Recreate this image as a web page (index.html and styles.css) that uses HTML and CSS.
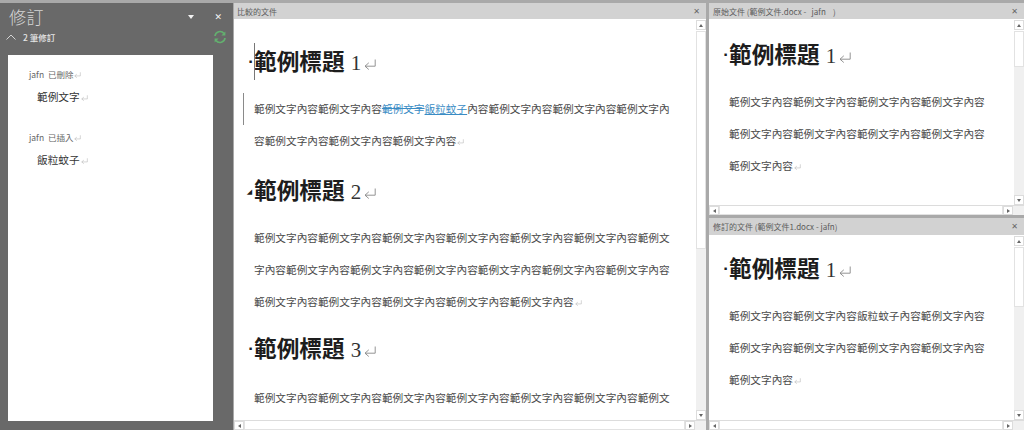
FILE: index.html
```html
<!DOCTYPE html>
<html lang="zh-Hant">
<head>
    <meta charset="UTF-8">
    <title>比較的文件</title>
    <link rel="stylesheet" href="styles.css">
</head>
<body>
    <svg class="defs" aria-hidden="true">
        <symbol id="ret" viewBox="0 0 12 11">
            <path d="M11.2 0.5V7.2H1M1 7.2L4.8 3.8M1 7.2L4.8 10.5" fill="none" stroke="currentColor" stroke-width="0.9"/>
        </symbol>
    </svg>
    <div class="app">
        <!-- Revisions panel -->
        <aside class="side">
            <div class="side-title">
                <span class="side-name">修訂</span>
                <span class="side-caret"></span>
                <span class="side-close">✕</span>
            </div>
            <div class="side-count">
                <svg class="chevron" viewBox="0 0 10 6"><path d="M0.5 5.5L5 1L9.5 5.5" fill="none" stroke="#d4d4d4" stroke-width="1"/></svg>
                <span class="count-text">2 筆修訂</span>
                <svg class="refresh" viewBox="0 0 14 14">
                    <path d="M2 6A5 5 0 0 1 11 3.6" fill="none" stroke="#63b06f" stroke-width="1.7"/>
                    <path d="M12.4 1.4V5.4H8.4Z" fill="#63b06f"/>
                    <path d="M12 8A5 5 0 0 1 3 10.4" fill="none" stroke="#63b06f" stroke-width="1.7"/>
                    <path d="M1.6 12.6V8.6H5.6Z" fill="#63b06f"/>
                </svg>
            </div>
            <div class="rev-list">
                <div class="rev-item">
                    <div class="rev-who">jafn&nbsp; 已刪除<svg class="ret-sm"><use href="#ret"/></svg></div>
                    <div class="rev-text">範例文字<svg class="ret-sm"><use href="#ret"/></svg></div>
                </div>
                <div class="rev-item">
                    <div class="rev-who">jafn&nbsp; 已插入<svg class="ret-sm"><use href="#ret"/></svg></div>
                    <div class="rev-text">飯粒蚊子<svg class="ret-sm"><use href="#ret"/></svg></div>
                </div>
            </div>
        </aside>

        <!-- Compared document -->
        <section class="pane center">
            <div class="pane-head"><span>比較的文件</span><span class="pane-close">✕</span></div>
            <div class="pane-body">
                <div class="doc doc-wide">
                    <h1 class="doc-h has-cursor"><span class="mark">·</span>範例標題 <span class="num">1</span><svg class="ret-lg"><use href="#ret"/></svg></h1>
                    <p class="doc-p changed">範例文字內容範例文字內容<span class="del">範例文字</span><span class="ins">飯粒蚊子</span>內容範例文字內容範例文字內容範例文字內容範例文字內容範例文字內容範例文字內容<svg class="ret-sm"><use href="#ret"/></svg></p>
                    <h1 class="doc-h"><span class="mark mark-fold">◢</span>範例標題 <span class="num">2</span><svg class="ret-lg"><use href="#ret"/></svg></h1>
                    <p class="doc-p doc-p-long">範例文字內容範例文字內容範例文字內容範例文字內容範例文字內容範例文字內容範例文字內容範例文字內容範例文字內容範例文字內容範例文字內容範例文字內容範例文字內容範例文字內容範例文字內容範例文字內容範例文字內容範例文字內容<svg class="ret-sm"><use href="#ret"/></svg></p>
                    <h1 class="doc-h"><span class="mark">·</span>範例標題 <span class="num">3</span><svg class="ret-lg"><use href="#ret"/></svg></h1>
                    <p class="doc-p doc-p-last">範例文字內容範例文字內容範例文字內容範例文字內容範例文字內容範例文字內容範例文字內容範例文字內容</p>
                </div>
                <div class="vscroll">
                    <span class="sb-btn sb-up"></span>
                    <span class="sb-thumb thumb-center"></span>
                    <span class="sb-track"></span>
                    <span class="sb-btn sb-down"></span>
                </div>
            </div>
            <div class="hscroll">
                <span class="sb-btn sb-left"></span>
                <span class="sb-bar"></span>
                <span class="sb-btn sb-right"></span>
                <span class="sb-corner"></span>
            </div>
        </section>

        <div class="right">
            <!-- Original document -->
            <section class="pane pane-top">
                <div class="pane-head"><span>原始文件 (範例文件.docx -&nbsp;&nbsp; jafn&nbsp;&nbsp;&nbsp; )</span><span class="pane-close">✕</span></div>
                <div class="pane-body">
                    <div class="doc doc-narrow">
                        <h1 class="doc-h"><span class="mark">·</span>範例標題 <span class="num">1</span><svg class="ret-lg"><use href="#ret"/></svg></h1>
                        <p class="doc-p">範例文字內容範例文字內容範例文字內容範例文字內容範例文字內容範例文字內容範例文字內容範例文字內容範例文字內容<svg class="ret-sm"><use href="#ret"/></svg></p>
                        <h1 class="doc-h"><span class="mark mark-fold">◢</span>範例標題 <span class="num">2</span></h1>
                    </div>
                    <div class="vscroll">
                        <span class="sb-btn sb-up"></span>
                        <span class="sb-thumb thumb-top"></span>
                        <span class="sb-track"></span>
                        <span class="sb-btn sb-down"></span>
                    </div>
                </div>
                <div class="hscroll">
                    <span class="sb-btn sb-left"></span>
                    <span class="sb-bar"></span>
                    <span class="sb-btn sb-right"></span>
                    <span class="sb-corner"></span>
                </div>
            </section>

            <!-- Revised document -->
            <section class="pane pane-bottom">
                <div class="pane-head"><span>修訂的文件 (範例文件1.docx - jafn)</span><span class="pane-close">✕</span></div>
                <div class="pane-body">
                    <div class="doc doc-narrow">
                        <h1 class="doc-h"><span class="mark">·</span>範例標題 <span class="num">1</span><svg class="ret-lg"><use href="#ret"/></svg></h1>
                        <p class="doc-p">範例文字內容範例文字內容飯粒蚊子內容範例文字內容範例文字內容範例文字內容範例文字內容範例文字內容範例文字內容<svg class="ret-sm"><use href="#ret"/></svg></p>
                    </div>
                    <div class="vscroll">
                        <span class="sb-btn sb-up"></span>
                        <span class="sb-thumb thumb-bottom"></span>
                        <span class="sb-track"></span>
                        <span class="sb-btn sb-down"></span>
                    </div>
                </div>
                <div class="hscroll">
                    <span class="sb-btn sb-left"></span>
                    <span class="sb-bar"></span>
                    <span class="sb-btn sb-right"></span>
                    <span class="sb-corner"></span>
                </div>
            </section>
        </div>
    </div>
</body>
</html>
```

FILE: styles.css
```css
* {
    box-sizing: border-box;
}

html, body {
    margin: 0;
    height: 100%;
    overflow: hidden;
}

body {
    font-family: "Noto Sans CJK TC", "Noto Sans", sans-serif;
    background-color: #a9a9a9;
}

.defs {
    display: none;
}

.app {
    display: flex;
    height: 430px;
    padding-top: 3px;
}

/* Revisions panel */
.side {
    width: 233px;
    display: flex;
    flex-direction: column;
    background-color: #696969;
}

.side-title {
    display: flex;
    align-items: center;
    height: 27px;
    padding: 0 11px 0 9px;
    color: #d6d6d6;
}

.side-name {
    font-size: 17px;
    font-weight: 300;
    letter-spacing: 0.5px;
    line-height: 27px;
}

.side-caret {
    margin-left: auto;
    margin-right: 20px;
    border-left: 3.5px solid transparent;
    border-right: 3.5px solid transparent;
    border-top: 4px solid #f2f2f2;
}

.side-close {
    font-family: "DejaVu Sans", sans-serif;
    font-size: 9px;
    font-weight: bold;
    color: #f2f2f2;
}

.side-count {
    display: flex;
    align-items: center;
    height: 14px;
    padding: 0 6px;
    color: #e6e6e6;
}

.chevron {
    width: 10px;
    height: 6px;
    margin-right: 7px;
}

.count-text {
    font-size: 8.5px;
    font-weight: 500;
}

.refresh {
    width: 14px;
    height: 14px;
    margin-left: auto;
}

.rev-list {
    width: 205px;
    height: 366px;
    margin: 11px 0 0 8px;
    padding: 12px 0 0 21px;
    background-color: #fff;
}

.rev-item {
    margin-bottom: 25px;
}

.rev-who {
    font-size: 8.5px;
    line-height: 14px;
    color: #666;
}

.rev-text {
    margin: 8px 0 0 8px;
    font-size: 10.67px;
    line-height: 16px;
    color: #333;
}

/* Panes */
.pane {
    display: flex;
    flex-direction: column;
    background-color: #fff;
}

.center {
    width: 472px;
    margin: 0 3px 0 1px;
}

.right {
    width: 315px;
    display: flex;
    flex-direction: column;
    gap: 3px;
}

.pane-top {
    height: 212px;
}

.pane-bottom {
    height: 212px;
}

.pane-head {
    display: flex;
    align-items: center;
    justify-content: space-between;
    flex-shrink: 0;
    height: 16px;
    padding: 0 6px 0 3px;
    background-color: #d2d2d2;
    font-size: 8px;
    color: #5c5c5c;
}

.pane-top .pane-head,
.pane-bottom .pane-head {
    padding-left: 4px;
}

.pane-bottom .pane-head {
    height: 17px;
}

.pane-close {
    font-family: "DejaVu Sans", sans-serif;
    font-size: 8px;
    color: #666;
}

.pane-body {
    display: flex;
    flex: 1;
    min-height: 0;
}

/* Document text */
.doc {
    flex: 1;
    min-width: 0;
    overflow: hidden;
    padding-left: 20px;
    color: #4a4a4a;
}

.doc-wide {
    padding-top: 24px;
    padding-right: 24px;
}

.doc-narrow {
    padding-top: 17px;
    padding-right: 28px;
}

.pane-bottom .doc-narrow {
    padding-top: 15px;
}

.doc-h {
    position: relative;
    margin: 0;
    font-size: 22.67px;
    font-weight: 700;
    line-height: 36px;
    color: #1d1d1d;
    white-space: nowrap;
}

.has-cursor::after {
    content: "";
    position: absolute;
    left: 0;
    top: 0;
    width: 1px;
    height: 37px;
    background-color: #777;
}

.mark {
    display: inline-block;
    width: 6px;
    margin-left: -6px;
    font-family: "Liberation Sans", sans-serif;
    font-size: 17px;
    line-height: 14px;
    text-align: center;
    vertical-align: 3px;
}

.mark-fold {
    width: 9px;
    margin-left: -9px;
    font-family: "DejaVu Sans", sans-serif;
    font-size: 7px;
    vertical-align: 5px;
}

.num {
    margin-left: 1px;
    font-family: "Liberation Serif", serif;
    font-size: 21px;
    font-weight: normal;
    color: #333;
}

.ret-lg {
    width: 12px;
    height: 11px;
    margin-left: 3px;
    color: #888;
}

.ret-sm {
    width: 7px;
    height: 6px;
    margin-left: 1px;
    color: #aaa;
}

.doc-p {
    position: relative;
    margin: 12px 0 15px;
    font-size: 10.67px;
    line-height: 32px;
}

.doc-p-long {
    margin-bottom: 12px;
}

.doc-p-last {
    margin-top: 14px;
}

.pane-top .doc-p {
    margin-bottom: 17px;
}

.changed::before {
    content: "";
    position: absolute;
    left: -11px;
    top: 0;
    width: 1px;
    height: 32px;
    background-color: #8a8a8a;
}

.del {
    color: #3a8cc4;
    text-decoration: line-through;
}

.ins {
    color: #3a8cc4;
    text-decoration: underline;
}

/* Scrollbars */
.vscroll {
    display: flex;
    flex-direction: column;
    flex-shrink: 0;
    width: 10px;
    padding-top: 1px;
    background-color: #fff;
}

.sb-btn {
    position: relative;
    display: block;
    flex-shrink: 0;
    width: 10px;
    height: 10px;
    background-color: #fff;
    border: 1px solid #dcdcdc;
}

.sb-btn::before {
    content: "";
    position: absolute;
    left: 2px;
    top: 2.5px;
    border-style: solid;
    border-color: transparent;
}

.sb-up::before {
    border-width: 0 2.5px 3px;
    border-bottom-color: #666;
}

.sb-down::before {
    border-width: 3px 2.5px 0;
    border-top-color: #666;
}

.sb-left::before {
    left: 2.5px;
    top: 2px;
    border-width: 2.5px 3px 2.5px 0;
    border-right-color: #666;
}

.sb-right::before {
    left: 3px;
    top: 2px;
    border-width: 2.5px 0 2.5px 3px;
    border-left-color: #666;
}

.sb-thumb {
    display: block;
    flex-shrink: 0;
    width: 10px;
    margin-top: 1px;
    background-color: #fff;
    border: 1px solid #e2e2e2;
}

.thumb-center {
    height: 218px;
}

.thumb-top {
    height: 36px;
}

.thumb-bottom {
    height: 60px;
}

.sb-track {
    flex: 1;
    background-color: #f0f0f0;
}

.hscroll {
    display: flex;
    flex-shrink: 0;
    height: 10px;
    background-color: #f0f0f0;
    border-top: 1px solid #dcdcdc;
}

.hscroll .sb-btn {
    height: 9px;
}

.sb-bar {
    flex: 1;
    background-color: #fff;
    border: 1px solid #e2e2e2;
    border-top: none;
}

.sb-corner {
    flex-shrink: 0;
    width: 11px;
    background-color: #f0f0f0;
}
```
